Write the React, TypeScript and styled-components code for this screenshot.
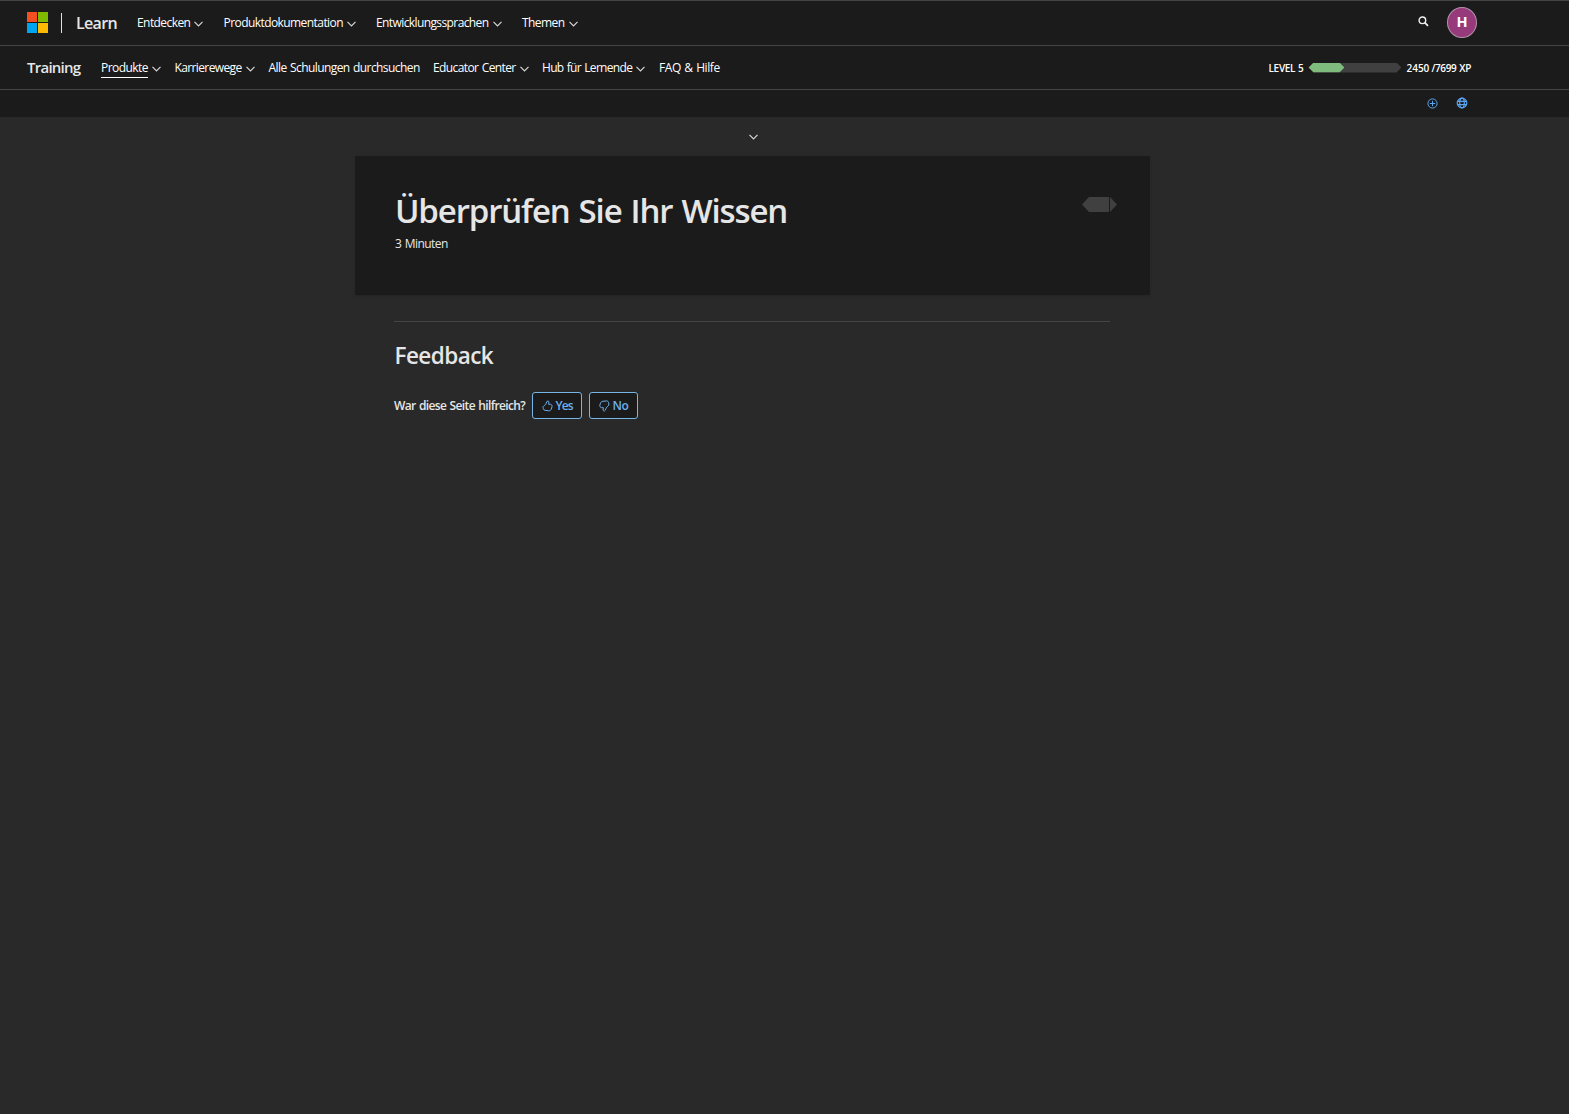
import React from 'react';
import styled, { createGlobalStyle } from 'styled-components';

const GlobalStyle = createGlobalStyle`
  *, *::before, *::after { box-sizing: border-box; }
  body {
    margin: 0;
    background: #292929;
    color: #e6e6e6;
    font-family: "Open Sans", "Noto Sans", sans-serif;
    font-size: 12px;
  }
  h1, h2, p { margin: 0; }
`;

const Page = styled.div`
  min-height: 1114px;
  background: #292929;
`;

const Header = styled.header`
  background: #1b1b1b;
  border-top: 1px solid #444;
`;

const Bar = styled.div<{ $height: number; $lift?: number }>`
  display: flex;
  align-items: center;
  height: ${p => p.$height}px;
  padding: 0 91px ${p => p.$lift ?? 0}px 27px;
  border-bottom: 1px solid #444;
`;

const Logo = styled.span`
  display: grid;
  grid-template-columns: 10px 10px;
  grid-template-rows: 10px 10px;
  gap: 1px;
  flex: none;
`;

const Tile = styled.span<{ $color: string }>`
  background: ${p => p.$color};
`;

const Separator = styled.span`
  width: 1px;
  height: 20px;
  margin: 0 14px 0 13px;
  background: #e0e0e0;
`;

const Brand = styled.a<{ $size: number; $spacing: number; $width: number; $lift?: number }>`
  width: ${p => p.$width}px;
  flex: none;
  padding-bottom: ${p => p.$lift ?? 0}px;
  font-size: ${p => p.$size}px;
  font-weight: 640;
  letter-spacing: ${p => p.$spacing}px;
  line-height: 22px;
  white-space: nowrap;
`;

const Nav = styled.nav<{ $columns: string }>`
  display: grid;
  grid-template-columns: ${p => p.$columns};
  align-items: center;
`;

const NavItem = styled.a`
  display: flex;
  align-items: center;
  gap: 4px;
  color: #fff;
  white-space: nowrap;
`;

const NavLabel = styled.span<{ $active?: boolean; $spacing?: number }>`
  letter-spacing: ${p => p.$spacing ?? -0.57}px;
  word-spacing: 0.8px;
  line-height: 18px;
  box-shadow: ${p => (p.$active ? '0 1px 0 #fff' : 'none')};
`;

const Push = styled.div<{ $gap: number }>`
  display: flex;
  align-items: center;
  gap: ${p => p.$gap}px;
  margin-left: auto;
  padding-right: 1px;
`;

const SearchButton = styled.span`
  display: flex;
  padding-bottom: 2px;
`;

const Avatar = styled.span`
  display: flex;
  align-items: center;
  justify-content: center;
  width: 30px;
  height: 31px;
  border: 1px solid #b493ab;
  border-radius: 50%;
  background: #963a7c;
  color: #fff;
  font-size: 14.5px;
  font-weight: 700;
  line-height: 1;
`;

const Level = styled.div`
  display: flex;
  align-items: center;
  margin-left: auto;
  padding-right: 7px;
  color: #fff;
  font-size: 10px;
  font-weight: 600;
  line-height: 14px;
  white-space: nowrap;
`;

const LevelName = styled.span`
  letter-spacing: -0.3px;
  word-spacing: 0.5px;
`;

const Progress = styled.span`
  width: 93px;
  height: 10px;
  margin: 0 5px 0 5px;
  background: #404040;
  clip-path: polygon(0 50%, 5px 0, calc(100% - 5px) 0, 100% 50%, calc(100% - 5px) 100%, 5px 100%);
`;

const ProgressFill = styled.span`
  display: block;
  width: 36px;
  height: 100%;
  background: #7fbb7d;
  clip-path: polygon(0 50%, 5px 0, calc(100% - 5px) 0, 100% 50%, calc(100% - 5px) 100%, 5px 100%);
`;

const Points = styled.span`
  width: 25px;
`;

const PointsTotal = styled.span`
  letter-spacing: -0.35px;
  word-spacing: 0.6px;
`;

const ActionBar = styled.div`
  display: flex;
  justify-content: flex-end;
  align-items: center;
  gap: 18px;
  height: 27px;
  padding: 0 101px 1px 0;
`;

const Main = styled.main`
  width: 795px;
  margin-left: 355px;
`;

const Expander = styled.div`
  display: flex;
  justify-content: center;
  align-items: center;
  height: 39px;
  padding: 0 0 2px 2px;
`;

const Card = styled.section`
  display: flex;
  justify-content: space-between;
  height: 139px;
  padding: 32px 33px 0 39px;
  background: #1b1b1b;
  box-shadow: 0 1px 3px rgba(0, 0, 0, 0.12);
`;

const Title = styled.h1`
  padding-left: 1px;
  font-size: 33px;
  font-weight: 640;
  letter-spacing: -1.14px;
  word-spacing: 1.6px;
  line-height: 46px;
  white-space: nowrap;
`;

const Duration = styled.p`
  padding-left: 1px;
  letter-spacing: -0.55px;
  word-spacing: 0.8px;
  line-height: 20px;
`;

const XpTag = styled.span`
  display: flex;
  gap: 1px;
  margin-top: 9px;
  height: 15px;
`;

const TagBody = styled.span`
  width: 27px;
  background: #404040;
  clip-path: polygon(0 50%, 7px 0, 100% 0, 100% 100%, 7px 100%);
`;

const TagTip = styled.span`
  width: 7px;
  background: #404040;
  clip-path: polygon(0 0, 100% 50%, 0 100%);
`;

const Feedback = styled.section`
  margin: 26px 40px 0 39px;
  padding-top: 18px;
  border-top: 1px solid #444;
`;

const FeedbackTitle = styled.h2`
  padding-left: 0.5px;
  font-size: 22.5px;
  font-weight: 640;
  letter-spacing: -0.55px;
  line-height: 32px;
`;

const Rating = styled.div`
  display: flex;
  align-items: center;
  gap: 7px;
  margin-top: 20px;
`;

const Question = styled.span`
  width: 131px;
  font-weight: 640;
  letter-spacing: -0.64px;
  word-spacing: 0.9px;
  white-space: nowrap;
`;

const RateButton = styled.button<{ $width: number; $spacing: number }>`
  display: flex;
  align-items: center;
  gap: 3px;
  width: ${p => p.$width}px;
  height: 27px;
  padding: 0 0 0 8.5px;
  border: 1px solid #75b6e7;
  border-radius: 3px;
  background: #1b1b1b;
  color: #6cb0f0;
  font: 600 12px/18px "Open Sans", "Noto Sans", sans-serif;
  letter-spacing: ${p => p.$spacing}px;
`;

const ChevronIcon = styled.svg`
  margin-top: 2px;
  flex: none;
`;

const Chevron = () => (
  <ChevronIcon width="9" height="6" viewBox="0 0 9 6" fill="none" stroke="#d6d6d6" strokeWidth="1.2">
    <path d="M0.5 0.8 4.5 4.8 8.5 0.8" />
  </ChevronIcon>
);

const SearchIcon = () => (
  <svg width="11" height="11" viewBox="0 0 11 11" fill="none" stroke="#f2f2f2">
    <circle cx="4.4" cy="4.3" r="3.3" strokeWidth="1.4" />
    <path d="M6.8 6.7 10 9.8" strokeWidth="1.7" />
  </svg>
);

const PlusIcon = () => (
  <svg width="11" height="11" viewBox="0 0 11 11" fill="none" stroke="#5aa5f0">
    <circle cx="5.5" cy="5.5" r="4.6" />
    <path d="M5.5 2.8V8.2M2.8 5.5H8.2" />
  </svg>
);

const GlobeIcon = () => (
  <svg width="12" height="12" viewBox="0 0 12 12" fill="none" stroke="#5aa5f0" strokeWidth="1.2">
    <circle cx="6" cy="6" r="4.8" />
    <ellipse cx="6" cy="6" rx="2.3" ry="4.8" />
    <path d="M1.5 4.3H10.5M1.5 7.7H10.5" />
  </svg>
);

const Thumb = ({ down }: { down?: boolean }) => (
  <svg width="11" height="12" viewBox="0 0 11 12" fill="none" stroke="#6cb0f0" strokeLinejoin="round">
    {down ? (
      <path d="M5.4 11.1C4.1 11.2 3.8 9.6 4.4 7.7H2.6C1.4 7.5 0.6 6.4 0.8 5.2L1.5 3.2C1.9 2 2.8 1.3 4 1.3L7.6 0.9C8.6 0.9 9.2 1.5 9.5 2.4L9.9 4C10 4.8 9.8 5.4 9.2 5.9C7.6 7.2 6.7 8.4 6.5 10Z" />
    ) : (
      <path d="M5.6 0.9C6.9 0.8 7.2 2.4 6.6 4.3H8.4C9.6 4.5 10.4 5.4 10 6.7L9.3 9C8.9 10.2 8 11 6.8 10.8L3 10.3C2 10.2 1.5 9.6 1.3 8.7L1 7.7C0.8 6.9 1.1 6.3 1.8 5.9C3.4 5 4.3 3.7 4.6 2Z" />
    )}
  </svg>
);

type Entry = { label: string; menu?: boolean; active?: boolean; spacing?: number };

const primary: Entry[] = [
  { label: 'Entdecken', menu: true },
  { label: 'Produktdokumentation', menu: true },
  { label: 'Entwicklungssprachen', menu: true, spacing: -0.6 },
  { label: 'Themen', menu: true },
];

const secondary: Entry[] = [
  { label: 'Produkte', menu: true, active: true },
  { label: 'Karrierewege', menu: true, spacing: -0.62 },
  { label: 'Alle Schulungen durchsuchen' },
  { label: 'Educator Center', menu: true, spacing: -0.6 },
  { label: 'Hub für Lernende', menu: true, spacing: -0.68 },
  { label: 'FAQ & Hilfe', spacing: -0.42 },
];

const Menu = ({ entries, columns }: { entries: Entry[]; columns: string }) => (
  <Nav $columns={columns}>
    {entries.map(e => (
      <NavItem key={e.label}>
        <NavLabel $active={e.active} $spacing={e.spacing}>{e.label}</NavLabel>
        {e.menu && <Chevron />}
      </NavItem>
    ))}
  </Nav>
);

export default function App() {
  return (
    <Page>
      <GlobalStyle />
      <Header>
        <Bar $height={45} $lift={1}>
          <Logo>
            <Tile $color="#f25022" />
            <Tile $color="#7fba00" />
            <Tile $color="#00a4ef" />
            <Tile $color="#ffb900" />
          </Logo>
          <Separator />
          <Brand $size={16} $spacing={-0.65} $width={61}>Learn</Brand>
          <Menu entries={primary} columns="86.5px 152.5px 146px auto" />
          <Push $gap={18}>
            <SearchButton>
              <SearchIcon />
            </SearchButton>
            <Avatar>H</Avatar>
          </Push>
        </Bar>
        <Bar $height={44}>
          <Brand $size={15} $spacing={-0.75} $width={74} $lift={2}>Training</Brand>
          <Menu entries={secondary} columns="73.5px 94px 164.5px 109px 117px auto" />
          <Level>
            <LevelName>LEVEL 5</LevelName>
            <Progress>
              <ProgressFill />
            </Progress>
            <Points>2450</Points>
            <PointsTotal>/7699 XP</PointsTotal>
          </Level>
        </Bar>
        <ActionBar>
          <PlusIcon />
          <GlobeIcon />
        </ActionBar>
      </Header>
      <Main>
        <Expander>
          <Chevron />
        </Expander>
        <Card>
          <div>
            <Title>Überprüfen Sie Ihr Wissen</Title>
            <Duration>3 Minuten</Duration>
          </div>
          <XpTag>
            <TagBody />
            <TagTip />
          </XpTag>
        </Card>
        <Feedback>
          <FeedbackTitle>Feedback</FeedbackTitle>
          <Rating>
            <Question>War diese Seite hilfreich?</Question>
            <RateButton $width={50} $spacing={-0.9}>
              <Thumb />
              Yes
            </RateButton>
            <RateButton $width={49} $spacing={-0.3}>
              <Thumb down />
              No
            </RateButton>
          </Rating>
        </Feedback>
      </Main>
    </Page>
  );
}
